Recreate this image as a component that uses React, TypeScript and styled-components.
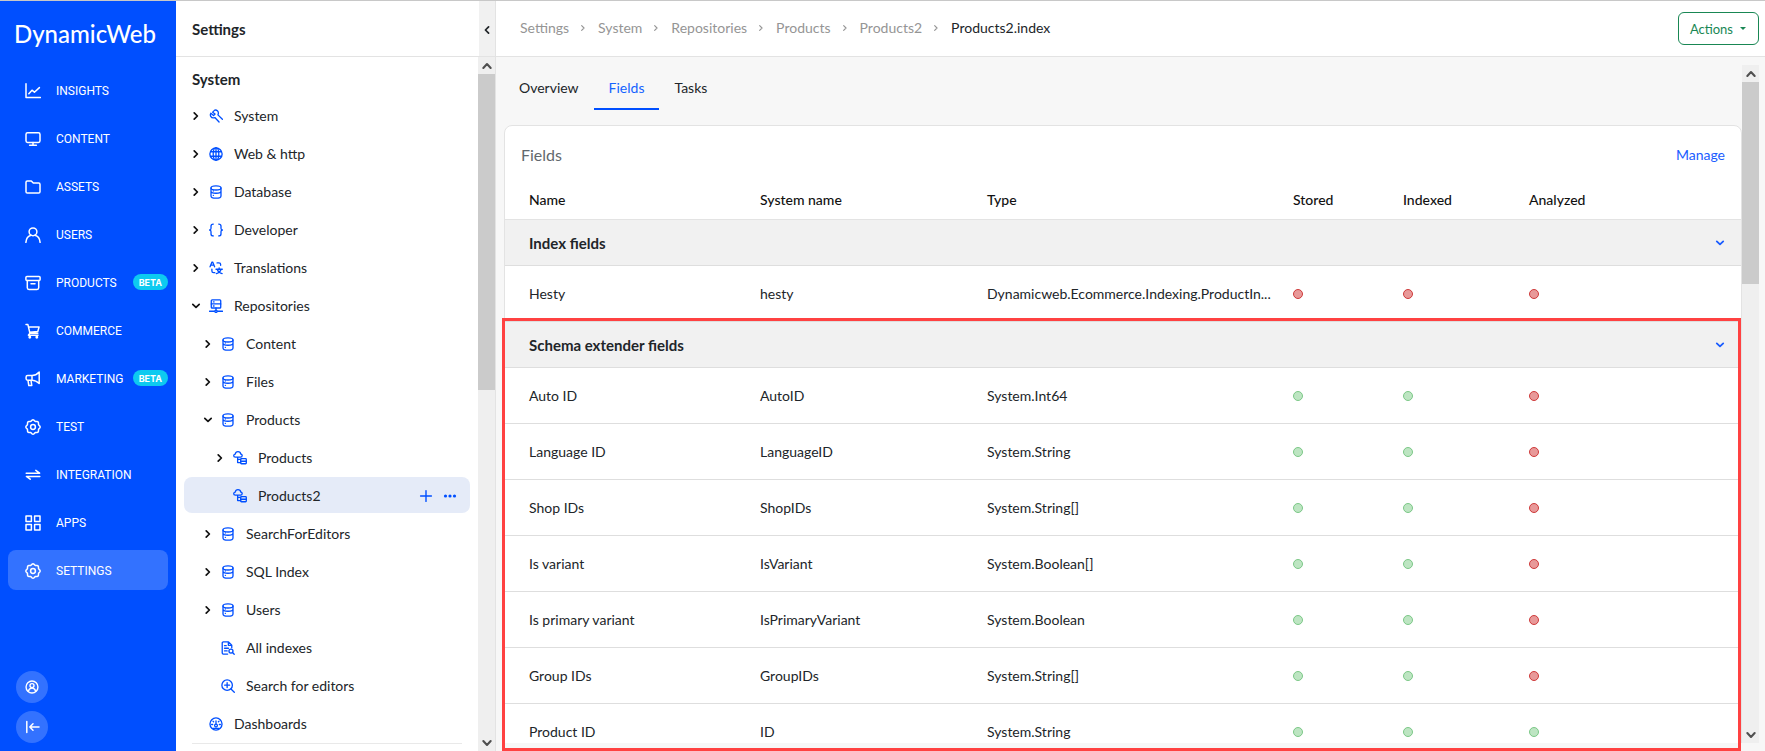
import React from "react";
import styled, { createGlobalStyle, css } from "styled-components";

const GlobalStyle = createGlobalStyle`
  *, *::before, *::after { box-sizing: border-box; }
  html, body { margin: 0; padding: 0; }
  body {
    font-family: Lato, "Open Sans", sans-serif;
    font-size: 14px;
    line-height: 20px;
    color: #212529;
    background: #fff;
    overflow: hidden;
  }
  button { font: inherit; color: inherit; background: none; border: 0; padding: 0; cursor: pointer; }
  a { color: inherit; text-decoration: none; }
  h1, h2, ul, ol { margin: 0; padding: 0; list-style: none; font-weight: inherit; }
  svg { display: block; flex: none; }
`;

/* ---------- icons, all on a 16 unit grid ---------- */

const gearOutline = (() => {
  const points: string[] = [];
  for (let i = 0; i < 96; i += 1) {
    const a = (i / 96) * Math.PI * 2;
    const r = 6.6 + 0.55 * Math.cos(8 * a);
    points.push(`${(8 + r * Math.cos(a)).toFixed(2)} ${(8 + r * Math.sin(a)).toFixed(2)}`);
  }
  return `M${points.join("L")}Z`;
})();

const icons = {
  insights: <path d="M1 .8v13.7h14.4M3.8 10.8l3.2-3.6 2.4 2 5-4.6" />,
  content: <><rect x="1" y="1.8" width="14" height="9.6" rx="1.6" /><path d="M8 11.5v2.6M4.6 14.2h6.8" /></>,
  assets: <path d="M1 3.2c0-.8.5-1.3 1.3-1.3h4l2 2.2h5.4c.8 0 1.3.5 1.3 1.3v7.4c0 .8-.5 1.3-1.3 1.3H2.3c-.8 0-1.3-.5-1.3-1.3z" />,
  users: <><circle cx="8" cy="4.8" r="3.9" /><path d="M.9 15.4c.3-3.8 2.6-6.6 5.2-7.2M15.1 15.4c-.3-3.8-2.6-6.6-5.2-7.2" /></>,
  products: <><rect x=".9" y="1.6" width="14.2" height="3.8" rx="1" /><path d="M2.3 5.5v7.2c0 1 .6 1.7 1.7 1.7h8c1.1 0 1.7-.7 1.7-1.7V5.5M6 8.7h4" /></>,
  commerce: <><path d="M1 1.600h1.900l2 8.600h7.900M3.600 3.900h10.500l-1.300 4.600-8.200.7M4.900 10.200l-1.500 2h9.600" /><circle cx="4.800" cy="14.200" r=".7" /><circle cx="11.800" cy="14.200" r=".7" /></>,
  marketing: <><path d="M14.200 1v11.600C12 10.300 9.800 9.200 7 9.200H2.600c-.9 0-1.500-.6-1.500-1.400V6c0-.8.6-1.400 1.500-1.400H7C9.800 4.600 12 3.400 14.200 1zM7 4.600v4.600M3 9.400l.8 5.200h3L6 9.400" /></>,
  gear: <><path d={gearOutline} /><circle cx="8" cy="8" r="2.400" /></>,
  integration: <path d="M1.200 6.200h13.400l-3.800-2.800M14.800 9.400H1.400l3.800 2.800" />,
  apps: <path d="M1 1h5.400v5.400H1zM9.600 1H15v5.400H9.600zM1 9.600h5.400V15H1zM9.600 9.600H15V15H9.600z" />,
  account: <><circle cx="8" cy="8" r="6.800" /><circle cx="8" cy="6.400" r="2.300" /><path d="M3.800 13c.4-2.200 2.100-3.700 4.200-3.700s3.800 1.500 4.200 3.700" /></>,
  collapse: <path d="M2.800 2.400v11.200M15 8H5.800M9 4.800L5.800 8 9 11.200" />,
  chevronRight: <path d="M6.200 4.800L9.400 8l-3.200 3.200" />,
  chevronLeft: <path d="M9.800 4.400L6.200 8l3.600 3.600" />,
  chevronDown: <path d="M4.800 6.400L8 9.400l3.200-3" />,
  arrowUp: <path d="M3.800 10.200L8 5.800l4.200 4.400" />,
  arrowDown: <path d="M3.800 5.800L8 10.200l4.200-4.400" />,
  tools: <path d="M6.900 5.800L4.200 3.600 6.500 1.300c2.300-.6 4.500 1.300 4.200 3.700-.1.700-.2 1.200-.5 1.700l5.100 5M6.900 5.800L5.200 7.500 2.100 4.900c-1.400 2.200.2 5.300 2.900 5.300.7 0 1.200-.1 1.700-.4l4.800 5" />,
  globe: <><circle cx="8" cy="8" r="7" /><ellipse cx="8" cy="8" rx="3.200" ry="7" /><path d="M1.800 5.400h12.400M1.800 10.600h12.400M8 1v14" /></>,
  database: <><ellipse cx="8" cy="3.300" rx="5.700" ry="2.400" /><path d="M2.300 3.300v9.200c0 1.500 2.500 2.600 5.700 2.600s5.700-1.100 5.700-2.600V3.300M2.300 7.200C2.300 8.500 4.800 9.400 8 9.400s5.700-.9 5.700-2.200M4.900 6.800h.2M4.900 11.800h.2" /></>,
  braces: <path d="M4.900 1.200c-1.900 0-2.600.8-2.600 2.300v2.400c0 1.200-.5 2.100-1.800 2.100 1.300 0 1.800.9 1.800 2.100v2.400c0 1.500.7 2.300 2.600 2.300M11.100 1.200c1.900 0 2.600.8 2.600 2.300v2.400c0 1.200.5 2.100 1.800 2.100-1.300 0-1.800.9-1.800 2.100v2.400c0 1.500-.7 2.300-2.600 2.300" />,
  translate: <><path d="M1.200 6.600L3.400 1.200h.8l2.200 5.400M2.100 4.800h3.400M9.200 2.200h2.200c1.200 0 1.900.7 1.900 1.900v.8M6.600 13.300H5.200c-1.200 0-1.900-.7-1.900-1.900V9.200M8 9.400h7.200M11.600 7.800v1.600M13.800 9.500c-.7 2.400-2.600 4.200-5.400 5M9.400 9.500c.7 2.400 2.700 4.200 5.600 5" /></>,
  server: <><rect x="2.600" y=".9" width="10.800" height="9.400" rx="1" /><path d="M2.600 5.600h10.800M8 10.300v2.600M.6 14h5.600M9.800 14h5.600M5 3.300h.8M5 8h.8" /><circle cx="8" cy="14" r="1.300" /></>,
  index: <><path d="M4.300 7H2.700C1.600 7 .8 6.300.8 5.300s.7-1.700 1.700-1.800C2.800 1.900 4.100.8 5.700.8s2.900 1.100 3.100 2.600c1 .1 1.700.9 1.700 1.800 0 1-.8 1.800-1.800 1.800H4.300M5.300 7v6.200h3.500M5.300 9.500h3.500" /><rect x="8.800" y="8.800" width="6.400" height="5.800" rx=".8" /><path d="M8.800 11.700h6.400" /></>,
  fileSearch: <><path d="M7.600 14.900H2.700c-.8 0-1.300-.5-1.300-1.300V2.300C1.400 1.500 1.900 1 2.700 1h5.900l3.700 3.700v3M8.400 1v3.900h3.900M4 5.300h2M4 8.300h4.500M4 11.300h3" /><circle cx="11.400" cy="11.500" r="2.300" /><path d="M13.100 13.200l2 2" /></>,
  zoomIn: <><circle cx="7" cy="7" r="6" /><path d="M11.400 11.400l3.800 3.800M7 4.200v5.600M4.200 7h5.600" /></>,
  dashboard: <><circle cx="8" cy="8" r="6.900" /><circle cx="8" cy="9.800" r="1.600" /><path d="M8 8.200V4.400M3 8.600h1.200M11.800 8.600H13M4.500 4.700l.8.800M11.500 4.700l-.8.800M4.200 13h7.600" /></>,
  plus: <path d="M8 2.600v10.800M2.600 8h10.800" />,
  dots: <g fill="currentColor" strokeWidth="0"><circle cx="3.500" cy="8" r="1.600" /><circle cx="8" cy="8" r="1.600" /><circle cx="12.500" cy="8" r="1.600" /></g>,
};

type IconName = keyof typeof icons;

const Icon = ({ name, size = 16, weight = 1.4 }: { name: IconName; size?: number; weight?: number }) => (
  <svg width={size} height={size} viewBox="0 0 16 16" fill="none" stroke="currentColor" strokeWidth={weight} strokeLinecap="round" strokeLinejoin="round" aria-hidden="true">
    {icons[name]}
  </svg>
);

/* ---------- page frame ---------- */

const Page = styled.div`
  display: flex;
  height: 100vh;
  border-top: 1px solid #c8c8c8;
`;

/* ---------- primary navigation ---------- */

const Sidebar = styled.aside`
  flex: none;
  width: 176px;
  display: flex;
  flex-direction: column;
  padding: 0 8px 8px;
  background: #004fff;
  color: #fff;
`;

const Logo = styled.a`
  padding: 17px 6px 20px;
  font-size: 24px;
  line-height: 32px;
  font-weight: 500;
`;

const NavList = styled.ul`
  display: flex;
  flex-direction: column;
  gap: 8px;
`;

const NavLink = styled.a<{ $active?: boolean }>`
  display: flex;
  align-items: center;
  height: 40px;
  padding: 2px 0 0 17px;
  border-radius: 8px;
  font-family: Roboto, Lato, sans-serif;
  font-size: 12px;
  background: ${(p) => (p.$active ? "#3372ff" : "transparent")};

  svg { margin-right: 15px; }
`;

const Beta = styled.span`
  margin: 0 0 2px auto;
  height: 16px;
  padding: 0 6px;
  border-radius: 8px;
  background: #0dcaf0;
  font-family: Inter, sans-serif;
  font-size: 9px;
  line-height: 17px;
  font-weight: 700;
`;

const SidebarFooter = styled.div`
  margin-top: auto;
  padding-left: 8px;
  display: flex;
  flex-direction: column;
  gap: 8px;
`;

const RoundButton = styled.button`
  display: grid;
  place-items: center;
  width: 32px;
  height: 32px;
  border-radius: 50%;
  background: #3372ff;
  color: #fff;
`;

/* ---------- settings tree ---------- */

const TreePanel = styled.section`
  flex: none;
  width: 320px;
  display: flex;
  flex-direction: column;
  border-right: 1px solid #e3e3e3;
`;

const TreeHeader = styled.header`
  flex: none;
  display: flex;
  height: 56px;
  border-bottom: 1px solid #e3e3e3;
`;

const TreeTitle = styled.h1`
  flex: 1;
  padding: 18px 16px;
  font-size: 15px;
  font-weight: 700;
`;

const CollapseButton = styled.button`
  display: grid;
  place-items: center;
  width: 16px;
  padding-top: 2px;
  background: #f1f1f1;
`;

const TreeBody = styled.div`
  flex: 1;
  min-height: 0;
  display: flex;
`;

const TreeScroll = styled.div`
  flex: 1;
  min-width: 0;
  overflow: hidden;
  padding: 12px 8px 0;
`;

const TreeHeading = styled.h2`
  padding: 0 8px 8px;
  font-size: 15px;
  font-weight: 700;
`;

const TreeList = styled.ul`
  display: flex;
  flex-direction: column;
  gap: 2px;
`;

const TreeRow = styled.li<{ $level: number; $selected?: boolean }>`
  display: flex;
  align-items: center;
  height: 36px;
  padding: 2px 12px 0 ${(p) => 4 + p.$level * 12}px;
  border-radius: 8px;
  color: #004fff;
  background: ${(p) => (p.$selected ? "#e5ebf8" : "transparent")};
`;

const Toggle = styled.button`
  width: 16px;
  height: 16px;
  color: #111;
`;

const ToggleSpace = styled.span`
  width: 16px;
`;

const TreeLink = styled.a`
  flex: 1;
  display: flex;
  align-items: center;
  gap: 11px;
  padding-left: 5px;
  color: #212529;

  svg { color: #004fff; }
`;

const RowButton = styled.button`
  margin-left: 8px;
  width: 16px;
  height: 16px;
`;

const TreeDivider = styled.hr`
  margin: 2px 8px 0;
  border: 0;
  border-top: 1px solid #e9e9e9;
`;

/* ---------- scroll bars ---------- */

const ScrollTrack = styled.div`
  flex: none;
  width: 17px;
  display: flex;
  flex-direction: column;
  background: #efefef;
  color: #505050;
`;

const ScrollButton = styled.span`
  display: grid;
  place-items: center;
  height: 17px;
`;

const ScrollThumb = styled.span<{ $visible: number }>`
  flex: ${(p) => p.$visible} 0 0;
  background: #cbcbcb;
`;

const ScrollRest = styled.span<{ $hidden: number }>`
  flex: ${(p) => p.$hidden} 0 0;
`;

const ScrollBar = ({ visible, hidden }: { visible: number; hidden: number }) => (
  <ScrollTrack aria-hidden="true">
    <ScrollButton><Icon name="arrowUp" size={14} weight={2.4} /></ScrollButton>
    <ScrollThumb $visible={visible} />
    <ScrollRest $hidden={hidden} />
    <ScrollButton><Icon name="arrowDown" size={14} weight={2.4} /></ScrollButton>
  </ScrollTrack>
);

/* ---------- main area ---------- */

const Main = styled.main`
  flex: 1;
  min-width: 0;
  display: flex;
  flex-direction: column;
  background: #f7f7f7;
`;

const TopBar = styled.header`
  flex: none;
  display: flex;
  align-items: center;
  justify-content: space-between;
  height: 56px;
  padding: 0 6px 0 24px;
  background: #fff;
  border-bottom: 1px solid #e3e3e3;
`;

const Crumbs = styled.ol`
  display: flex;
  align-items: center;
  padding-bottom: 2px;
`;

const Crumb = styled.li<{ $current?: boolean }>`
  display: flex;
  align-items: center;
  color: ${(p) => (p.$current ? "#212529" : "#959595")};

  svg { margin: 0 9px 0 8px; }
`;

const ActionsButton = styled.button`
  display: flex;
  align-items: center;
  gap: 7px;
  height: 33px;
  padding: 1px 12px 0 11px;
  border: 1px solid #198754;
  border-radius: 6px;
  font-size: 13px;
  color: #198754;

  &::after {
    content: "";
    margin-bottom: 2px;
    border: 3px solid transparent;
    border-top-color: currentColor;
    border-bottom: 0;
  }
`;

const Content = styled.div`
  position: relative;
  flex: 1;
  min-height: 0;
  display: flex;
  padding: 8px 6px 8px 8px;
`;

const ContentScroll = styled.div`
  flex: 1;
  min-width: 0;
  overflow: hidden;
`;

const Tabs = styled.div`
  display: flex;
  height: 45px;
  margin-bottom: 15px;
`;

const Tab = styled.button<{ $active?: boolean }>`
  padding: 3px 15px 0;
  border-bottom: 2px solid transparent;
  ${(p) => p.$active && css`
    color: #1463ff;
    border-bottom-color: #004fff;
  `}
`;

const Card = styled.section`
  background: #fff;
  border: 1px solid #e3e3e3;
  border-radius: 8px 8px 0 0;
`;

const CardHeader = styled.header`
  display: flex;
  align-items: center;
  justify-content: space-between;
  padding: 19px 16px 12px;
`;

const CardTitle = styled.h2`
  font-size: 16px;
  color: #62686d;
`;

const CardLink = styled.a`
  color: #1a5cff;
`;

const FieldTable = styled.table`
  width: 100%;
  table-layout: fixed;
  border-collapse: collapse;
`;

const Column = styled.col<{ $width?: number }>`
  width: ${(p) => (p.$width ? `${p.$width}px` : "auto")};
`;

const HeadCell = styled.th`
  height: 42px;
  padding: 4px 8px 0;
  text-align: left;
  font-weight: 500;
  font-size: 14px;
  color: #111;
  border-bottom: 1px solid #e3e3e3;

  &:first-child { padding-left: 24px; }
`;

const GroupCell = styled.th`
  height: 46px;
  padding: 1px 13px 0 24px;
  background: #f1f1f1;
  border-bottom: 1px solid #dedede;
  text-align: left;
  font-size: 15px;
  font-weight: 700;
`;

const GroupBar = styled.div`
  display: flex;
  align-items: center;
  justify-content: space-between;
`;

const GroupToggle = styled.button`
  width: 16px;
  height: 20px;
  color: #1a5cff;
`;

const Cell = styled.td`
  height: 56px;
  padding: 2px 8px 0;
  border-bottom: 1px solid #dedede;
  white-space: nowrap;
  overflow: hidden;
  text-overflow: ellipsis;

  &:first-child { padding-left: 24px; }
`;

const FlagCell = styled(Cell)`
  padding-top: 1px;
`;

const Flag = styled.span<{ $on: boolean }>`
  display: block;
  width: 10px;
  height: 10px;
  border-radius: 50%;
  border: 1px solid ${(p) => (p.$on ? "#7cc887" : "#cf3a3a")};
  background: ${(p) => (p.$on ? "#bde5c2" : "#e89999")};
`;

const Highlight = styled.div`
  position: absolute;
  inset: 261px 24px 0 6px;
  border: 3px solid #ff4141;
  pointer-events: none;
`;

/* ---------- data ---------- */

const navItems: { label: string; icon: IconName; beta?: boolean; active?: boolean }[] = [
  { label: "INSIGHTS", icon: "insights" },
  { label: "CONTENT", icon: "content" },
  { label: "ASSETS", icon: "assets" },
  { label: "USERS", icon: "users" },
  { label: "PRODUCTS", icon: "products", beta: true },
  { label: "COMMERCE", icon: "commerce" },
  { label: "MARKETING", icon: "marketing", beta: true },
  { label: "TEST", icon: "gear" },
  { label: "INTEGRATION", icon: "integration" },
  { label: "APPS", icon: "apps" },
  { label: "SETTINGS", icon: "gear", active: true },
];

type TreeItem = { label: string; icon: IconName; level: number; open?: boolean; selected?: boolean };

const treeItems: TreeItem[] = [
  { label: "System", icon: "tools", level: 0, open: false },
  { label: "Web & http", icon: "globe", level: 0, open: false },
  { label: "Database", icon: "database", level: 0, open: false },
  { label: "Developer", icon: "braces", level: 0, open: false },
  { label: "Translations", icon: "translate", level: 0, open: false },
  { label: "Repositories", icon: "server", level: 0, open: true },
  { label: "Content", icon: "database", level: 1, open: false },
  { label: "Files", icon: "database", level: 1, open: false },
  { label: "Products", icon: "database", level: 1, open: true },
  { label: "Products", icon: "index", level: 2, open: false },
  { label: "Products2", icon: "index", level: 2, selected: true },
  { label: "SearchForEditors", icon: "database", level: 1, open: false },
  { label: "SQL Index", icon: "database", level: 1, open: false },
  { label: "Users", icon: "database", level: 1, open: false },
  { label: "All indexes", icon: "fileSearch", level: 1 },
  { label: "Search for editors", icon: "zoomIn", level: 1 },
  { label: "Dashboards", icon: "dashboard", level: 0 },
];

const crumbs = ["Settings", "System", "Repositories", "Products", "Products2", "Products2.index"];

type Field = { name: string; system: string; type: string; flags: [boolean, boolean, boolean] };

const groups: { title: string; fields: Field[] }[] = [
  {
    title: "Index fields",
    fields: [
      { name: "Hesty", system: "hesty", type: "Dynamicweb.Ecommerce.Indexing.ProductIn...", flags: [false, false, false] },
    ],
  },
  {
    title: "Schema extender fields",
    fields: [
      { name: "Auto ID", system: "AutoID", type: "System.Int64", flags: [true, true, false] },
      { name: "Language ID", system: "LanguageID", type: "System.String", flags: [true, true, false] },
      { name: "Shop IDs", system: "ShopIDs", type: "System.String[]", flags: [true, true, false] },
      { name: "Is variant", system: "IsVariant", type: "System.Boolean[]", flags: [true, true, false] },
      { name: "Is primary variant", system: "IsPrimaryVariant", type: "System.Boolean", flags: [true, true, false] },
      { name: "Group IDs", system: "GroupIDs", type: "System.String[]", flags: [true, true, false] },
      { name: "Product ID", system: "ID", type: "System.String", flags: [true, true, true] },
    ],
  },
];

/* ---------- page ---------- */

export default function App() {
  return (
    <>
      <GlobalStyle />
      <Page>
        <Sidebar>
          <Logo href="#">DynamicWeb</Logo>
          <nav aria-label="Main">
            <NavList>
              {navItems.map((item) => (
                <li key={item.label}>
                  <NavLink href="#" $active={item.active} aria-current={item.active ? "page" : undefined}>
                    <Icon name={item.icon} weight={1.5} />
                    {item.label}
                    {item.beta && <Beta>BETA</Beta>}
                  </NavLink>
                </li>
              ))}
            </NavList>
          </nav>
          <SidebarFooter>
            <RoundButton aria-label="Account"><Icon name="account" size={14} weight={1.6} /></RoundButton>
            <RoundButton aria-label="Collapse menu"><Icon name="collapse" weight={1.5} /></RoundButton>
          </SidebarFooter>
        </Sidebar>

        <TreePanel>
          <TreeHeader>
            <TreeTitle>Settings</TreeTitle>
            <CollapseButton aria-label="Hide panel"><Icon name="chevronLeft" size={14} weight={2} /></CollapseButton>
          </TreeHeader>
          <TreeBody>
            <TreeScroll>
              <TreeHeading>System</TreeHeading>
              <TreeList>
                {treeItems.map((item) => (
                  <TreeRow key={`${item.level}-${item.label}`} $level={item.level} $selected={item.selected}>
                    {item.open === undefined ? (
                      <ToggleSpace />
                    ) : (
                      <Toggle aria-label={`Toggle ${item.label}`} aria-expanded={item.open}>
                        <Icon name={item.open ? "chevronDown" : "chevronRight"} weight={1.7} />
                      </Toggle>
                    )}
                    <TreeLink href="#">
                      <Icon name={item.icon} size={14} weight={1.5} />
                      {item.label}
                    </TreeLink>
                    {item.selected && (
                      <>
                        <RowButton aria-label="Add"><Icon name="plus" /></RowButton>
                        <RowButton aria-label="More"><Icon name="dots" /></RowButton>
                      </>
                    )}
                  </TreeRow>
                ))}
              </TreeList>
              <TreeDivider />
            </TreeScroll>
            <ScrollBar visible={316} hidden={344} />
          </TreeBody>
        </TreePanel>

        <Main>
          <TopBar>
            <nav aria-label="Breadcrumb">
              <Crumbs>
                {crumbs.map((label, i) => {
                  const current = i === crumbs.length - 1;
                  return (
                    <Crumb key={label} $current={current}>
                      {current ? label : <a href="#">{label}</a>}
                      {!current && <Icon name="chevronRight" size={12} weight={1.5} />}
                    </Crumb>
                  );
                })}
              </Crumbs>
            </nav>
            <ActionsButton>Actions</ActionsButton>
          </TopBar>

          <Content>
            <ContentScroll>
              <Tabs role="tablist">
                <Tab role="tab">Overview</Tab>
                <Tab role="tab" aria-selected $active>Fields</Tab>
                <Tab role="tab">Tasks</Tab>
              </Tabs>
              <Card>
                <CardHeader>
                  <CardTitle>Fields</CardTitle>
                  <CardLink href="#">Manage</CardLink>
                </CardHeader>
                <FieldTable>
                  <colgroup>
                    <Column $width={247} />
                    <Column $width={227} />
                    <Column $width={306} />
                    <Column $width={110} />
                    <Column $width={126} />
                    <Column />
                  </colgroup>
                  <thead>
                    <tr>
                      {["Name", "System name", "Type", "Stored", "Indexed", "Analyzed"].map((label) => (
                        <HeadCell key={label} scope="col">{label}</HeadCell>
                      ))}
                    </tr>
                  </thead>
                  {groups.map((group) => (
                    <tbody key={group.title}>
                      <tr>
                        <GroupCell colSpan={6} scope="rowgroup">
                          <GroupBar>
                            {group.title}
                            <GroupToggle aria-label={`Toggle ${group.title}`} aria-expanded>
                              <Icon name="chevronDown" weight={1.8} />
                            </GroupToggle>
                          </GroupBar>
                        </GroupCell>
                      </tr>
                      {group.fields.map((field) => (
                        <tr key={field.system}>
                          <Cell>{field.name}</Cell>
                          <Cell>{field.system}</Cell>
                          <Cell>{field.type}</Cell>
                          {field.flags.map((on, i) => (
                            <FlagCell key={i}><Flag $on={on} role="img" aria-label={on ? "Yes" : "No"} /></FlagCell>
                          ))}
                        </tr>
                      ))}
                    </tbody>
                  ))}
                </FieldTable>
              </Card>
            </ContentScroll>
            <ScrollBar visible={202} hidden={442} />
            <Highlight />
          </Content>
        </Main>
      </Page>
    </>
  );
}
